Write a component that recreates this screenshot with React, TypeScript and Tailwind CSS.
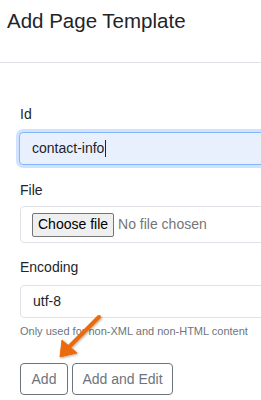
const font = { fontFamily: '"Liberation Sans", Arial, sans-serif' };

function Label({ children }: { children: React.ReactNode }) {
  return <label className="block text-[14px] leading-[21px] text-[#212529]">{children}</label>;
}

export default function App() {
  return (
    <div className="relative h-[400px] w-[261px] overflow-hidden bg-white" style={font}>
      <div className="px-[7px] pt-[9px] pb-[29px]">
        <h1 className="text-[20.5px] leading-[24px] text-[#212529]">Add Page Template</h1>
      </div>
      <div className="h-px w-full bg-[#dee2e6]" />

      <form className="w-[300px] pl-[20px] pt-[41px]">
        <Label>Id</Label>
        <div className="mt-[7px] flex h-[33px] items-center rounded-[4px] border border-[#86b7fe] bg-[#e8f0fe] pl-[12px] text-[14px] text-[#212529] shadow-[0_0_0_3px_rgba(13,110,253,0.2)] -ml-px">
          contact-info
          <span className="ml-px inline-block h-[17px] w-px bg-[#212529]" />
        </div>

        <div className="mt-[15px]">
          <Label>File</Label>
        </div>
        <div className="mt-[5px] flex h-[37px] items-center rounded-[4px] border border-[#dee2e6] pl-[11px] text-[14px]">
          <span className="flex h-[24px] items-center rounded-[2px] border border-[#767676] bg-[#efefef] px-[5px] text-black">
            Choose file
          </span>
          <span className="ml-[4px] text-[#757575]">No file chosen</span>
        </div>

        <div className="mt-[14px]">
          <Label>Encoding</Label>
        </div>
        <div className="mt-[7px] flex h-[33px] items-center rounded-[4px] border border-[#dee2e6] pl-[12px] text-[14px] text-[#212529]">
          utf-8
        </div>
        <p className="mt-[4px] text-[11px] leading-[18px] text-[#6c757d]">
          Only used for non-XML and non-HTML content
        </p>

        <div className="mt-[23px] flex gap-[4px]">
          <button
            type="button"
            className="h-[32px] w-[48px] rounded-[4px] border border-[#6c757d] text-[14px] text-[#6c757d]"
          >
            Add
          </button>
          <button
            type="button"
            className="h-[32px] w-[101px] rounded-[4px] border border-[#6c757d] text-[14px] text-[#6c757d]"
          >
            Add and Edit
          </button>
        </div>
      </form>

      <svg className="pointer-events-none absolute left-0 top-0" width="261" height="400">
        <defs>
          <filter id="sh" x="-20%" y="-20%" width="140%" height="140%">
            <feDropShadow dx="1" dy="1" stdDeviation="1" floodColor="#000" floodOpacity="0.3" />
          </filter>
        </defs>
        <g filter="url(#sh)" fill="#ea6a0c" stroke="#ea6a0c">
          <line x1="99" y1="317" x2="68" y2="348" strokeWidth="4" strokeLinecap="round" />
          <polygon points="60,357 62,340 77,353" strokeWidth="1" strokeLinejoin="round" />
        </g>
      </svg>
    </div>
  );
}
